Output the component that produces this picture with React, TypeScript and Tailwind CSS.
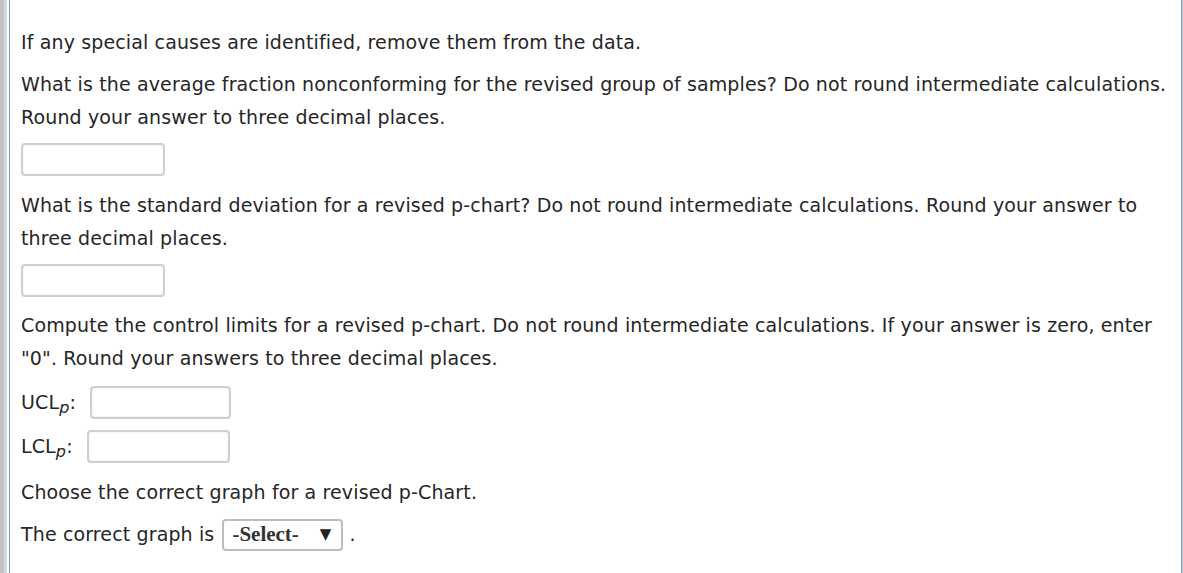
import React from 'react';

const font = { fontFamily: '"DejaVu Sans", Verdana, sans-serif' };

function Box({ w = 'w-[144px]' }: { w?: string }) {
  return (
    <input
      type="text"
      className={`${w} h-[33px] rounded-[4px] border-2 border-[#cfcfcf] bg-white shadow-[inset_0_0_1px_#bdbdbd] outline-none`}
    />
  );
}

export default function App() {
  return (
    <div className="flex h-[573px] w-[1183px] overflow-hidden bg-white">
      <div className="w-[4px] shrink-0 bg-[#c3c3c3]" />
      <div className="w-[3px] shrink-0 bg-[#d9d9d9]" />
      <div className="w-[2px] shrink-0 bg-white" />
      <div className="w-[1px] shrink-0 bg-[#6d9fe6]" />
      <div
        className="flex-1 pl-[11px] pr-[8px] pt-[26px] text-[19px] leading-[33px] tracking-[0.13px] text-[#262626]"
        style={font}
      >
        <p>If any special causes are identified, remove them from the data.</p>
        <p className="mt-[9px]">
          What is the average fraction nonconforming for the revised group of samples? Do not round intermediate
          calculations. Round your answer to three decimal places.
        </p>
        <div className="mt-[9px] flex">
          <Box />
        </div>
        <p className="mt-[13px]">
          What is the standard deviation for a revised p-chart? Do not round intermediate calculations. Round your
          answer to three decimal places.
        </p>
        <div className="mt-[9px] flex">
          <Box />
        </div>
        <p className="mt-[12px]">
          Compute the control limits for a revised p-chart. Do not round intermediate calculations. If your answer is
          zero, enter "0". Round your answers to three decimal places.
        </p>
        <div className="mt-[11px] flex items-center gap-[14px]">
          <span>
            UCL<sub className="text-[16px] italic">p</sub>:
          </span>
          <Box w="w-[141px]" />
        </div>
        <div className="mt-[11px] flex items-center gap-[14px]">
          <span>
            LCL<sub className="text-[16px] italic">p</sub>:
          </span>
          <Box w="w-[143px]" />
        </div>
        <p className="mt-[13px]">Choose the correct graph for a revised p-Chart.</p>
        <div className="mt-[9px] flex items-center">
          <span>The correct graph is</span>
          <div className="ml-[8px] flex h-[32px] w-[121px] items-center justify-between rounded-[4px] border-2 border-[#bdbdbd] pl-[8px] pr-[10px] text-[#333]">
            <span className="text-[21px] font-bold tracking-normal" style={{ fontFamily: '"Liberation Serif", serif' }}>
              -Select-
            </span>
            <span className="text-[15px] text-[#222]">▼</span>
          </div>
          <span className="ml-[6px]">.</span>
        </div>
      </div>
      <div className="w-[1px] shrink-0 bg-[#6d9fe6]" />
      <div className="w-[1px] shrink-0 bg-[#c3c3c3]" />
    </div>
  );
}
